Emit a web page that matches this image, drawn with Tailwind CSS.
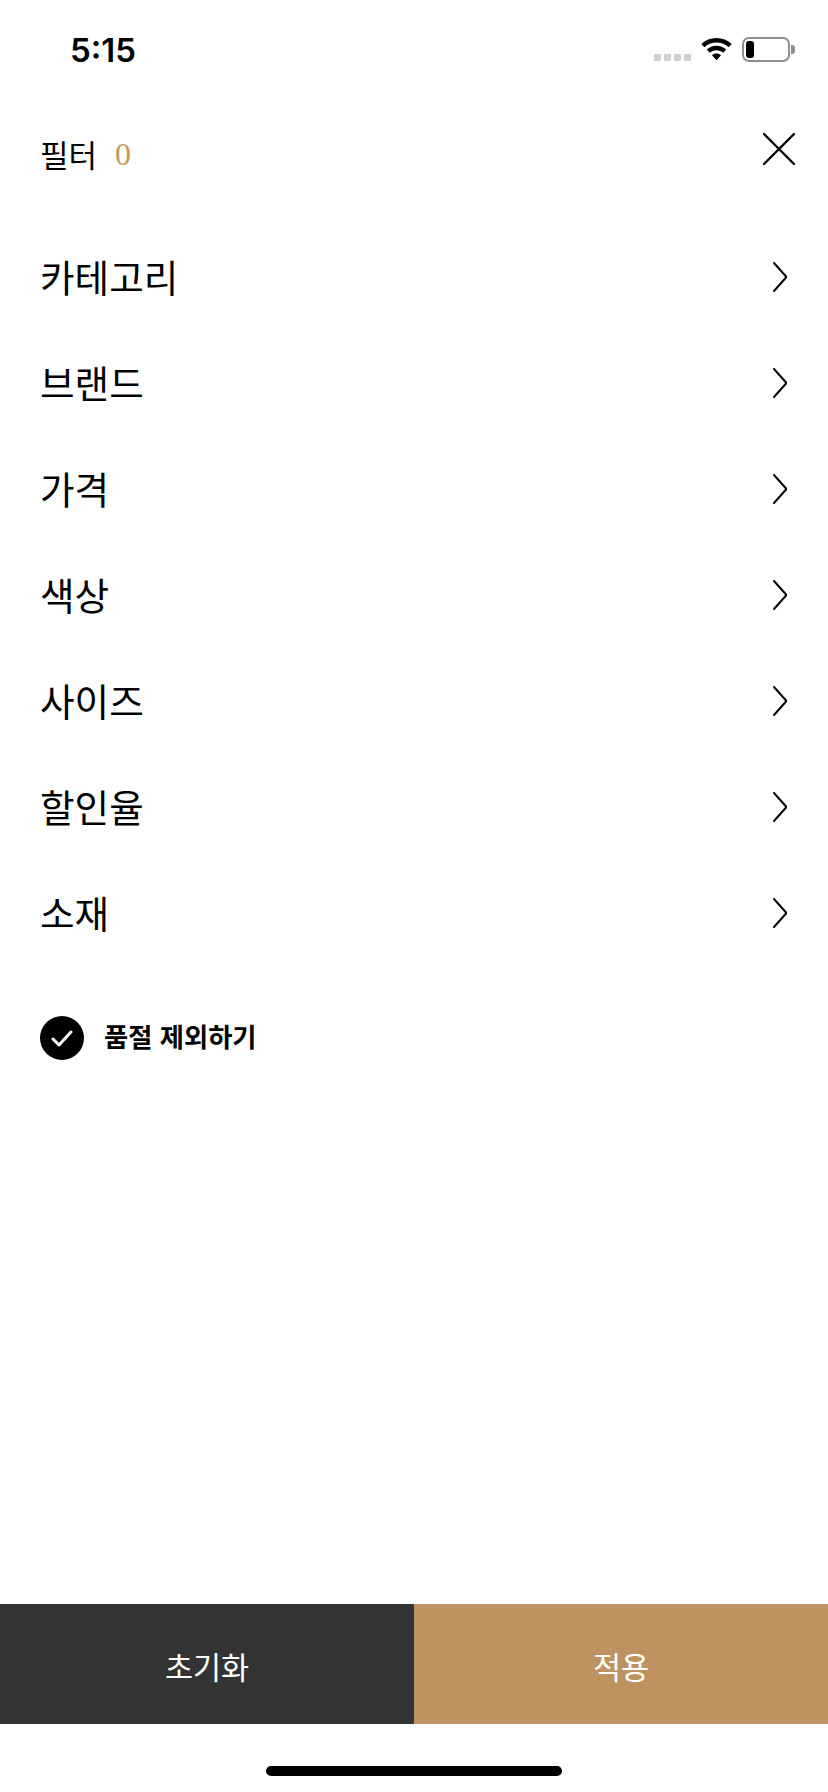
<!DOCTYPE html>
<html lang="ko">
<head>
  <meta charset="utf-8" />
  <title>필터</title>
  <meta name="viewport" content="width=device-width, initial-scale=1" />
  <script src="https://cdn.jsdelivr.net/npm/@tailwindcss/browser@4"></script>
</head>
<body class="bg-white">
<div class="w-[828px] h-[1792px] flex flex-col bg-white text-black font-['Noto_Sans_CJK_KR','Noto_Sans',sans-serif]">

  <!-- status bar -->
  <div class="h-[100px] flex items-start justify-between pl-[70px] pr-[33px] pt-[30px]">
    <span class="font-['Inter',sans-serif] font-semibold text-[33px] leading-[40px]">5:15</span>
    <div class="flex items-start pt-[7px]">
      <div class="flex gap-[3px] mt-[17px] mr-[10px]">
        <i class="block w-[7px] h-[7px] rounded-[1px] bg-[#cfcfcf]"></i>
        <i class="block w-[7px] h-[7px] rounded-[1px] bg-[#cfcfcf]"></i>
        <i class="block w-[7px] h-[7px] rounded-[1px] bg-[#cfcfcf]"></i>
        <i class="block w-[7px] h-[7px] rounded-[1px] bg-[#cfcfcf]"></i>
      </div>
      <svg class="w-[31px] h-[24px] mr-[10px] mt-[1px]" viewBox="0 0 31 24">
        <path d="M15.5 0C9.6 0 4.3 2.3.3 6l3 3.2C6.500 6.300 10.800 4.500 15.500 4.500s9 1.800 12.200 4.700l3-3.200C26.700 2.300 21.400 0 15.500 0z" fill="#000"/>
        <path d="M15.500 7.800c-3.700 0-7.100 1.400-9.700 3.800l3 3.200c1.800-1.600 4.100-2.600 6.700-2.600s4.900 1 6.700 2.600l3-3.200c-2.600-2.400-6-3.800-9.700-3.800z" fill="#000"/>
        <path d="M15.500 15.600c-1.700 0-3.300.6-4.500 1.700l4.500 5 4.500-5c-1.200-1.100-2.800-1.700-4.500-1.700z" fill="#000"/>
      </svg>
      <div class="flex items-center">
        <div class="w-[48px] h-[25px] rounded-[7px] border-2 border-[#8e8e8e] p-[2px]">
          <div class="w-[8px] h-full rounded-[3px] bg-black"></div>
        </div>
        <div class="w-[4px] h-[9px] ml-[1px] rounded-r-[3px] bg-[#8e8e8e]"></div>
      </div>
    </div>
  </div>

  <!-- header -->
  <div class="h-[124px] flex items-start justify-between pl-[40px] pr-[33px]">
    <div class="flex items-center h-[36px] mt-[36px]">
      <span class="text-[31px] leading-[36px]">필터</span>
      <span class="ml-[18px] font-['Liberation_Serif',serif] text-[32px] leading-[36px] text-[#c8965f]">0</span>
    </div>
    <svg class="w-[32px] h-[32px] mt-[33px]" viewBox="0 0 32 32" fill="none" stroke="#000" stroke-width="2.400" stroke-linecap="round">
      <path d="M1 1l30 30M31 1L1 31"/>
    </svg>
  </div>

  <!-- filter rows -->
  <ul class="flex flex-col">
    <li class="h-[106px] flex items-center justify-between pl-[40px] pr-[41px]">
      <span class="text-[37.600px] leading-[50px] -mt-[2px]">카테고리</span>
      <svg class="w-[14px] h-[30px]" viewBox="0 0 14 30" fill="none" stroke="#000" stroke-width="2" stroke-linecap="round" stroke-linejoin="round"><path d="M1 1l12.500 14L1 29"/></svg>
    </li>
    <li class="h-[106px] flex items-center justify-between pl-[40px] pr-[41px]">
      <span class="text-[37.600px] leading-[50px] -mt-[2px]">브랜드</span>
      <svg class="w-[14px] h-[30px]" viewBox="0 0 14 30" fill="none" stroke="#000" stroke-width="2" stroke-linecap="round" stroke-linejoin="round"><path d="M1 1l12.500 14L1 29"/></svg>
    </li>
    <li class="h-[106px] flex items-center justify-between pl-[40px] pr-[41px]">
      <span class="text-[37.600px] leading-[50px] -mt-[2px]">가격</span>
      <svg class="w-[14px] h-[30px]" viewBox="0 0 14 30" fill="none" stroke="#000" stroke-width="2" stroke-linecap="round" stroke-linejoin="round"><path d="M1 1l12.500 14L1 29"/></svg>
    </li>
    <li class="h-[106px] flex items-center justify-between pl-[40px] pr-[41px]">
      <span class="text-[37.600px] leading-[50px] -mt-[2px]">색상</span>
      <svg class="w-[14px] h-[30px]" viewBox="0 0 14 30" fill="none" stroke="#000" stroke-width="2" stroke-linecap="round" stroke-linejoin="round"><path d="M1 1l12.500 14L1 29"/></svg>
    </li>
    <li class="h-[106px] flex items-center justify-between pl-[40px] pr-[41px]">
      <span class="text-[37.600px] leading-[50px] -mt-[2px]">사이즈</span>
      <svg class="w-[14px] h-[30px]" viewBox="0 0 14 30" fill="none" stroke="#000" stroke-width="2" stroke-linecap="round" stroke-linejoin="round"><path d="M1 1l12.500 14L1 29"/></svg>
    </li>
    <li class="h-[106px] flex items-center justify-between pl-[40px] pr-[41px]">
      <span class="text-[37.600px] leading-[50px] -mt-[2px]">할인율</span>
      <svg class="w-[14px] h-[30px]" viewBox="0 0 14 30" fill="none" stroke="#000" stroke-width="2" stroke-linecap="round" stroke-linejoin="round"><path d="M1 1l12.500 14L1 29"/></svg>
    </li>
    <li class="h-[106px] flex items-center justify-between pl-[40px] pr-[41px]">
      <span class="text-[37.600px] leading-[50px] -mt-[2px]">소재</span>
      <svg class="w-[14px] h-[30px]" viewBox="0 0 14 30" fill="none" stroke="#000" stroke-width="2" stroke-linecap="round" stroke-linejoin="round"><path d="M1 1l12.500 14L1 29"/></svg>
    </li>
  </ul>

  <!-- exclude sold out -->
  <div class="flex items-center mt-[50px] pl-[40px]">
    <div class="w-[44px] h-[44px] rounded-full bg-black flex items-center justify-center">
      <svg class="w-[22px] h-[17px]" viewBox="0 0 22 17" fill="none" stroke="#fff" stroke-width="3" stroke-linecap="round" stroke-linejoin="round"><path d="M2 9l6 6L20 2"/></svg>
    </div>
    <span class="ml-[20px] text-[26.300px] leading-[36px] font-bold -mt-[5px]">품절 제외하기</span>
  </div>

  <!-- buttons -->
  <div class="mt-auto grid grid-cols-2 h-[120px]">
    <button class="bg-[#333333] text-white text-[30.500px] leading-[36px] pt-[4px]">초기화</button>
    <button class="bg-[#bf935f] text-white text-[30.500px] leading-[36px] pt-[4px]">적용</button>
  </div>

  <!-- home indicator -->
  <div class="h-[68px] flex justify-center pt-[42px]">
    <div class="w-[296px] h-[10px] rounded-full bg-black"></div>
  </div>
</div>
</body>
</html>
